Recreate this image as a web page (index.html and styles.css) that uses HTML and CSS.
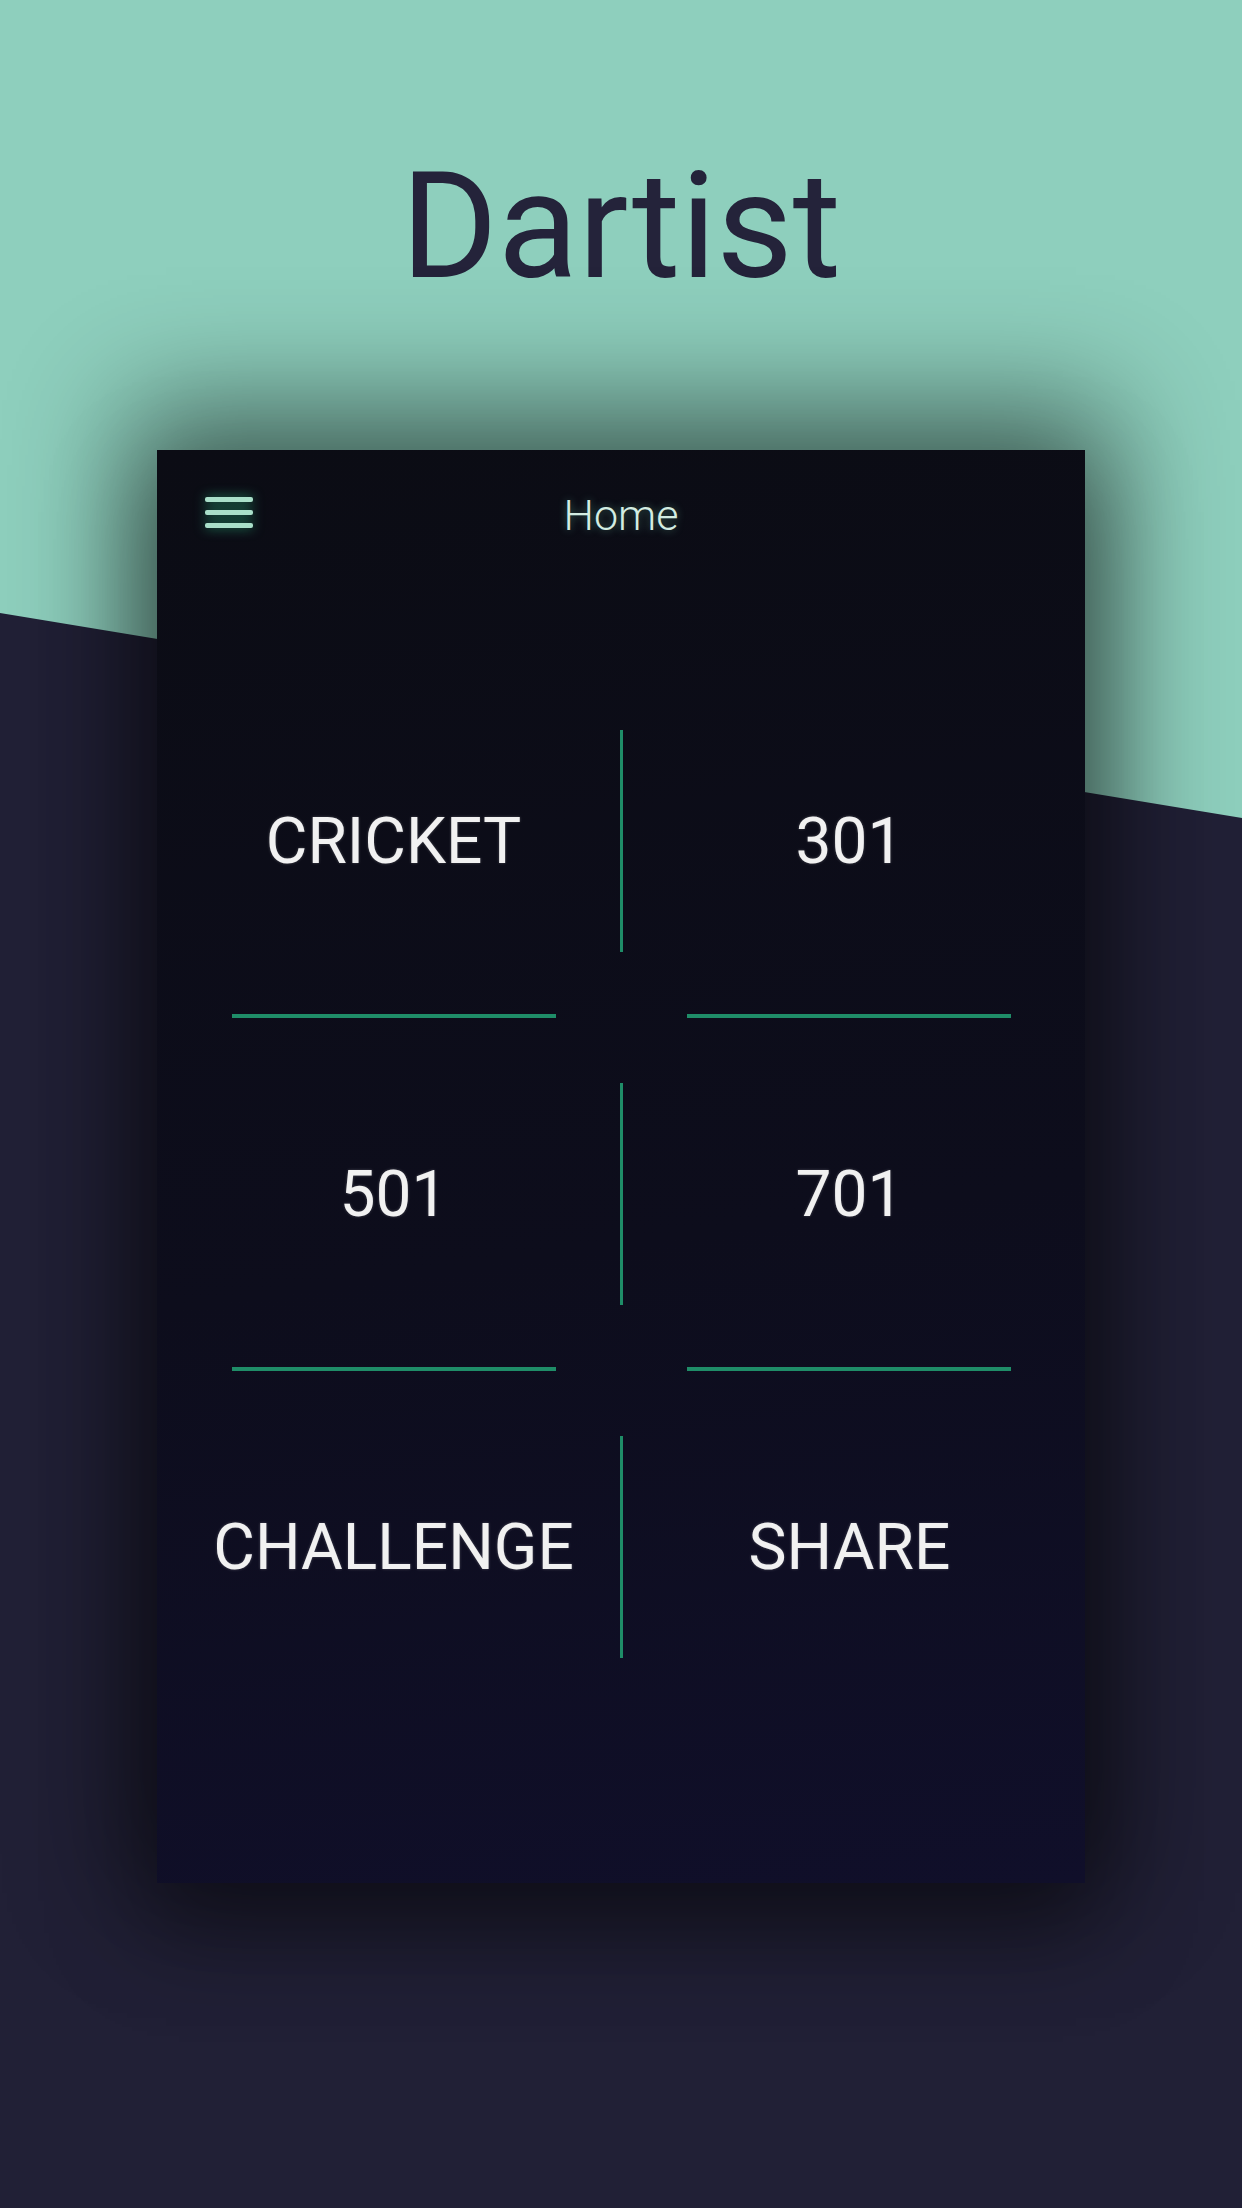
FILE: index.html
```html
<!DOCTYPE html>
<html lang="en">
<head>
<meta charset="utf-8">
<title>Dartist</title>
<link rel="stylesheet" href="styles.css">
</head>
<body>
<div class="page">
  <h1 class="title">Dartist</h1>
  <div class="card">
    <div class="header">
      <div class="menu"><span></span><span></span><span></span></div>
      <div class="header-title">Home</div>
      <div></div>
    </div>
    <div class="grid">
      <div class="row">
        <div class="cell">CRICKET</div>
        <div class="vline"></div>
        <div class="cell">301</div>
      </div>
      <div class="sep"><div class="hline"></div><div class="hline"></div></div>
      <div class="row">
        <div class="cell">501</div>
        <div class="vline"></div>
        <div class="cell">701</div>
      </div>
      <div class="sep"><div class="hline"></div><div class="hline"></div></div>
      <div class="row">
        <div class="cell">CHALLENGE</div>
        <div class="vline"></div>
        <div class="cell">SHARE</div>
      </div>
    </div>
  </div>
</div>
</body>
</html>
```
FILE: styles.css
```css
html, body {
  margin: 0;
  padding: 0;
}
body {
  width: 1242px;
  height: 2208px;
  background: #8ecfbd;
  font-family: Roboto, "Noto Sans", sans-serif;
  overflow: hidden;
  position: relative;
}
body::before {
  content: "";
  position: absolute;
  inset: 0;
  background: #212036;
  clip-path: polygon(0 613px, 100% 818px, 100% 100%, 0 100%);
}
.page {
  position: relative;
  z-index: 1;
  display: flex;
  flex-direction: column;
  align-items: center;
}
.title {
  margin: 153px 0 0;
  height: 148px;
  font-size: 148px;
  line-height: 148px;
  font-weight: 400;
  color: #24233a;
  letter-spacing: 0;
}
.card {
  margin-top: 149px;
  width: 928px;
  height: 1433px;
  margin-left: 0;
  background: linear-gradient(172deg, #0b0c14 0%, #0d0d1c 55%, #100f2a 100%);
  box-shadow: 0 -20px 110px 30px rgba(0, 0, 0, 0.45), 0 40px 90px 10px rgba(0, 0, 0, 0.35);
  display: flex;
  flex-direction: column;
}
.header {
  height: 125px;
  display: grid;
  grid-template-columns: 1fr auto 1fr;
  align-items: center;
}
.menu {
  margin-left: 48px;
  width: 48px;
  display: flex;
  flex-direction: column;
  gap: 8px;
  filter: drop-shadow(0 0 6px rgba(40, 170, 120, 0.8));
}
.menu span {
  display: block;
  height: 5px;
  border-radius: 2px;
  background: #a9dfc9;
}
.header-title {
  font-size: 43px;
  font-weight: 300;
  color: #d3ede2;
  text-shadow: 0 0 8px rgba(120, 220, 180, 0.45);
  padding-top: 4px;
}
.grid {
  padding: 155px 9px 0 10px;
  display: flex;
  flex-direction: column;
}
.row {
  height: 222px;
  display: grid;
  grid-template-columns: 1fr 3px 1fr;
  align-items: center;
}
.vline {
  height: 222px;
  background: #1f8d68;
}
.cell {
  text-align: center;
  font-size: 64px;
  font-weight: 400;
  color: #f1f1f1;
  text-shadow: 0 0 3px rgba(255, 255, 255, 0.25);
}
.sep {
  height: 131px;
  display: grid;
  grid-template-columns: 1fr 1fr;
  align-items: center;
  padding-bottom: 4px;
  box-sizing: border-box;
}
.hline {
  width: 324px;
  height: 4px;
  justify-self: center;
  background: #1f8d68;
}
```
